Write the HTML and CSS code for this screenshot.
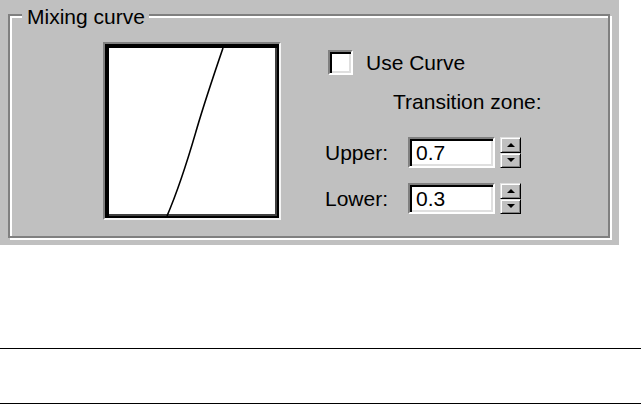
FILE: index.html
```html
<!DOCTYPE html>
<html>
<head>
<meta charset="utf-8">
<link rel="stylesheet" href="styles.css">
</head>
<body>
<div class="panel">
  <div class="group">
    <div class="legend">Mixing curve</div>
    <div class="curve-frame">
      <div class="curve">
        <svg class="curve-svg" viewBox="0 0 168 168" width="168" height="168">
          <path d="M114 0 C101 38 93 63 88 80 S73 133 58 168" fill="none" stroke="#000" stroke-width="1.6"/>
        </svg>
      </div>
    </div>
    <div class="controls">
      <div class="check-row">
        <span class="checkbox"></span>
        <span class="label">Use Curve</span>
      </div>
      <div class="zone-title">Transition zone:</div>
      <div class="field-row">
        <span class="field-label">Upper:</span>
        <span class="input">0.7</span>
        <span class="spinner">
          <span class="spin-btn"><span class="tri up"></span></span>
          <span class="spin-btn"><span class="tri down"></span></span>
        </span>
      </div>
      <div class="field-row second">
        <span class="field-label">Lower:</span>
        <span class="input">0.3</span>
        <span class="spinner">
          <span class="spin-btn"><span class="tri up"></span></span>
          <span class="spin-btn"><span class="tri down"></span></span>
        </span>
      </div>
    </div>
  </div>
</div>
<div class="rule first"></div>
<div class="rule last"></div>
</body>
</html>
```
FILE: styles.css
```css
html, body {
  margin: 0;
  padding: 0;
  background: #fff;
}
body {
  font-family: "Liberation Sans", Arial, sans-serif;
  font-size: 21px;
  color: #000;
}
.panel {
  width: 619px;
  height: 245px;
  background: #c0c0c0;
  padding: 14px 0 0 8px;
  box-sizing: border-box;
}
.group {
  position: relative;
  width: 602px;
  height: 224px;
  box-sizing: border-box;
  border: 2px solid #808080;
  box-shadow: inset 2px 2px 0 #fff, 2px 2px 0 #fff;
  display: flex;
  align-items: flex-start;
}
.legend {
  position: absolute;
  top: -11px;
  left: 12px;
  padding: 0 4px 0 5px;
  background: #c0c0c0;
  line-height: 24px;
}
.curve-frame {
  margin: 26px 0 0 93px;
  border: 2px solid;
  border-color: #808080 #f4f4f4 #f4f4f4 #808080;
}
.curve {
  border-style: solid;
  border-width: 4px 2px 2px 4px;
  border-color: #000;
  box-shadow: inset -2px -2px 0 #404040;
  background: #fff;
  display: flex;
}
.curve-svg {
  display: block;
}
.controls {
  margin: 34px 0 0 44px;
  display: flex;
  flex-direction: column;
  align-items: flex-start;
}
.check-row {
  display: flex;
  align-items: center;
  height: 25px;
  margin-left: 3px;
}
.checkbox {
  width: 25px;
  height: 25px;
  box-sizing: border-box;
  background: #fff;
  border: 2px solid;
  border-color: #808080 #fff #fff #808080;
  box-shadow: inset 2px 2px 0 #000, inset -2px -2px 0 #dfdfdf;
}
.label {
  margin-left: 13px;
  line-height: 24px;
}
.zone-title {
  margin: 15px 0 0 68px;
  line-height: 24px;
}
.field-row {
  display: flex;
  align-items: center;
  margin-top: 23px;
  height: 31px;
}
.field-row.second {
  margin-top: 15px;
}
.field-label {
  width: 83px;
  line-height: 24px;
}
.input {
  width: 87px;
  height: 31px;
  box-sizing: border-box;
  background: #fff;
  border: 2px solid;
  border-color: #808080 #fff #fff #808080;
  box-shadow: inset 2px 2px 0 #000, inset -2px -2px 0 #dfdfdf;
  padding: 0 0 0 6px;
  display: flex;
  align-items: center;
  line-height: 24px;
}
.spinner {
  margin-left: 5px;
  width: 21px;
  height: 31px;
  display: flex;
  flex-direction: column;
}
.spin-btn {
  flex: 1;
  box-sizing: border-box;
  background: #c0c0c0;
  border: 1px solid;
  border-color: #dfdfdf #000 #000 #dfdfdf;
  box-shadow: inset 1px 1px 0 #fff, inset -1px -1px 0 #808080;
  display: flex;
  align-items: center;
  justify-content: center;
}
.tri {
  width: 0;
  height: 0;
  border-left: 4px solid transparent;
  border-right: 4px solid transparent;
}
.tri.up {
  border-bottom: 4px solid #000;
}
.tri.down {
  border-top: 4px solid #000;
}
.rule {
  height: 1px;
  background: #000;
}
.rule.first {
  margin-top: 103px;
}
.rule.last {
  margin-top: 54px;
}
```
